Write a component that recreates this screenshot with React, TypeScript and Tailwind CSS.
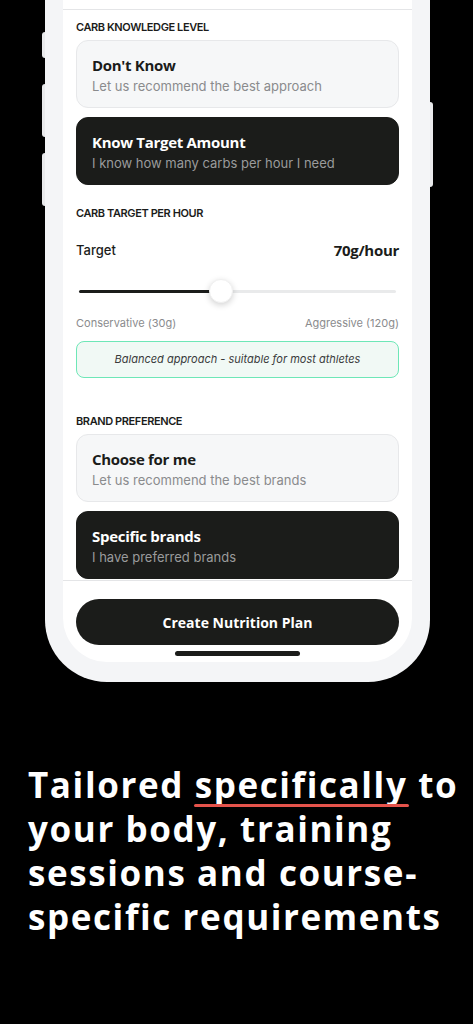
const body = { fontFamily: 'Inter, "Liberation Sans", sans-serif' };
const display = { fontFamily: '"Open Sans", "Liberation Sans", sans-serif' };

interface OptionCardProps {
  title: string;
  subtitle: string;
  selected?: boolean;
}

function OptionCard({ title, subtitle, selected }: OptionCardProps) {
  return (
    <div
      className={`flex flex-col gap-[2px] rounded-[12px] border px-[15px] pt-[14px] pb-[12px] ${
        selected ? 'border-[#1b1c1a] bg-[#1b1c1a]' : 'border-[#e7e8ea] bg-[#f6f7f8]'
      }`}
    >
      <p
        style={display}
        className={`text-[15px] leading-[20px] font-bold tracking-[-0.3px] ${selected ? 'text-white' : 'text-[#1b1c1a]'}`}
      >
        {title}
      </p>
      <p style={body} className={`text-[13px] leading-[18px] ${selected ? 'text-[#9a9b9c]' : 'text-[#8a8b8d]'}`}>
        {subtitle}
      </p>
    </div>
  );
}

function SectionLabel({ children }: { children: string }) {
  return (
    <p style={body} className="text-[11px] leading-[14px] font-semibold uppercase tracking-[-0.4px] text-[#1b1c1a]">
      {children}
    </p>
  );
}

function Slider() {
  return (
    <div className="relative h-[24px] px-[3px]">
      <div className="flex h-full items-center">
        <div className="h-[3px] w-[142px] rounded-full bg-[#1b1c1a]" />
        <div className="h-[3px] flex-1 rounded-full bg-[#e9eaeb]" />
      </div>
      <div className="absolute top-0 left-[133px] h-[24px] w-[24px] rounded-full border border-[#f0f0f0] bg-white shadow-[0_2px_6px_rgba(0,0,0,0.18)]" />
    </div>
  );
}

export default function App() {
  return (
    <div className="h-[1024px] w-[473px] overflow-hidden bg-black">
      {/* phone */}
      <div className="relative ml-[45px] w-[385px] rounded-b-[62px] bg-[#f4f5f7] px-[18px] pb-[20px]">
        {/* side buttons */}
        <div className="absolute top-[32px] left-[-3px] h-[26px] w-[3px] rounded-l-sm bg-[#e9eaec]" />
        <div className="absolute top-[84px] left-[-3px] h-[53px] w-[3px] rounded-l-sm bg-[#e9eaec]" />
        <div className="absolute top-[153px] left-[-3px] h-[53px] w-[3px] rounded-l-sm bg-[#e9eaec]" />
        <div className="absolute top-[102px] right-[-3px] h-[85px] w-[3px] rounded-r-sm bg-[#e9eaec]" />

        <div className="flex flex-col rounded-b-[44px] bg-white">
          <div className="h-[10px] border-b border-[#e4e5e7]" />
          <div className="h-[571px] overflow-hidden border-b border-[#e4e5e7] px-[13px] pt-[10px]">
            <SectionLabel>Carb Knowledge Level</SectionLabel>
            <div className="mt-[6px] flex flex-col gap-[9px]">
              <OptionCard title="Don't Know" subtitle="Let us recommend the best approach" />
              <OptionCard title="Know Target Amount" subtitle="I know how many carbs per hour I need" selected />
            </div>

            <div className="mt-[21px]">
              <SectionLabel>Carb Target Per Hour</SectionLabel>
            </div>
            <div className="mt-[20px] flex items-center justify-between">
              <span style={body} className="text-[13px] leading-[18px] font-medium text-[#1b1c1a]">
                Target
              </span>
              <span style={display} className="text-[15px] leading-[20px] font-bold tracking-[-0.3px] text-[#1b1c1a]">
                70g/hour
              </span>
            </div>
            <div className="mt-[19px]">
              <Slider />
            </div>
            <div style={body} className="mt-[13px] flex justify-between text-[11px] leading-[14px] text-[#8a8b8d]">
              <span>Conservative (30g)</span>
              <span>Aggressive (120g)</span>
            </div>
            <div className="mt-[11px] flex h-[37px] items-center justify-center rounded-[8px] border border-[#6ee7b7] bg-[#f1f9f5]">
              <span style={body} className="text-[11px] italic text-[#3a3b3c]">
                Balanced approach - suitable for most athletes
              </span>
            </div>

            <div className="mt-[36px]">
              <SectionLabel>Brand Preference</SectionLabel>
            </div>
            <div className="mt-[6px] flex flex-col gap-[9px]">
              <OptionCard title="Choose for me" subtitle="Let us recommend the best brands" />
              <OptionCard title="Specific brands" subtitle="I have preferred brands" selected />
            </div>
          </div>

          <div className="flex flex-col items-center px-[13px] pt-[18px] pb-[6px]">
            <button
              style={display}
              className="flex h-[46px] w-full items-center justify-center rounded-full bg-[#1b1c1a] text-[14px] font-bold text-white"
            >
              Create Nutrition Plan
            </button>
            <div className="mt-[6px] h-[5px] w-[125px] rounded-full bg-[#1b1c1a]" />
          </div>
        </div>
      </div>

      {/* headline */}
      <h1
        style={display}
        className="mt-[81px] pl-[28px] text-[35px] leading-[44px] font-bold tracking-[1.6px] whitespace-nowrap text-white"
      >
        Tailored{' '}
        <span className="relative">
          specifically
          <span className="absolute bottom-[1px] left-[-1px] right-[-2px] h-[3px] rounded-full bg-[#e5534b]" />
        </span>{' '}
        to
        <br />
        your body, training
        <br />
        sessions and course-
        <br />
        specific requirements
      </h1>
    </div>
  );
}
